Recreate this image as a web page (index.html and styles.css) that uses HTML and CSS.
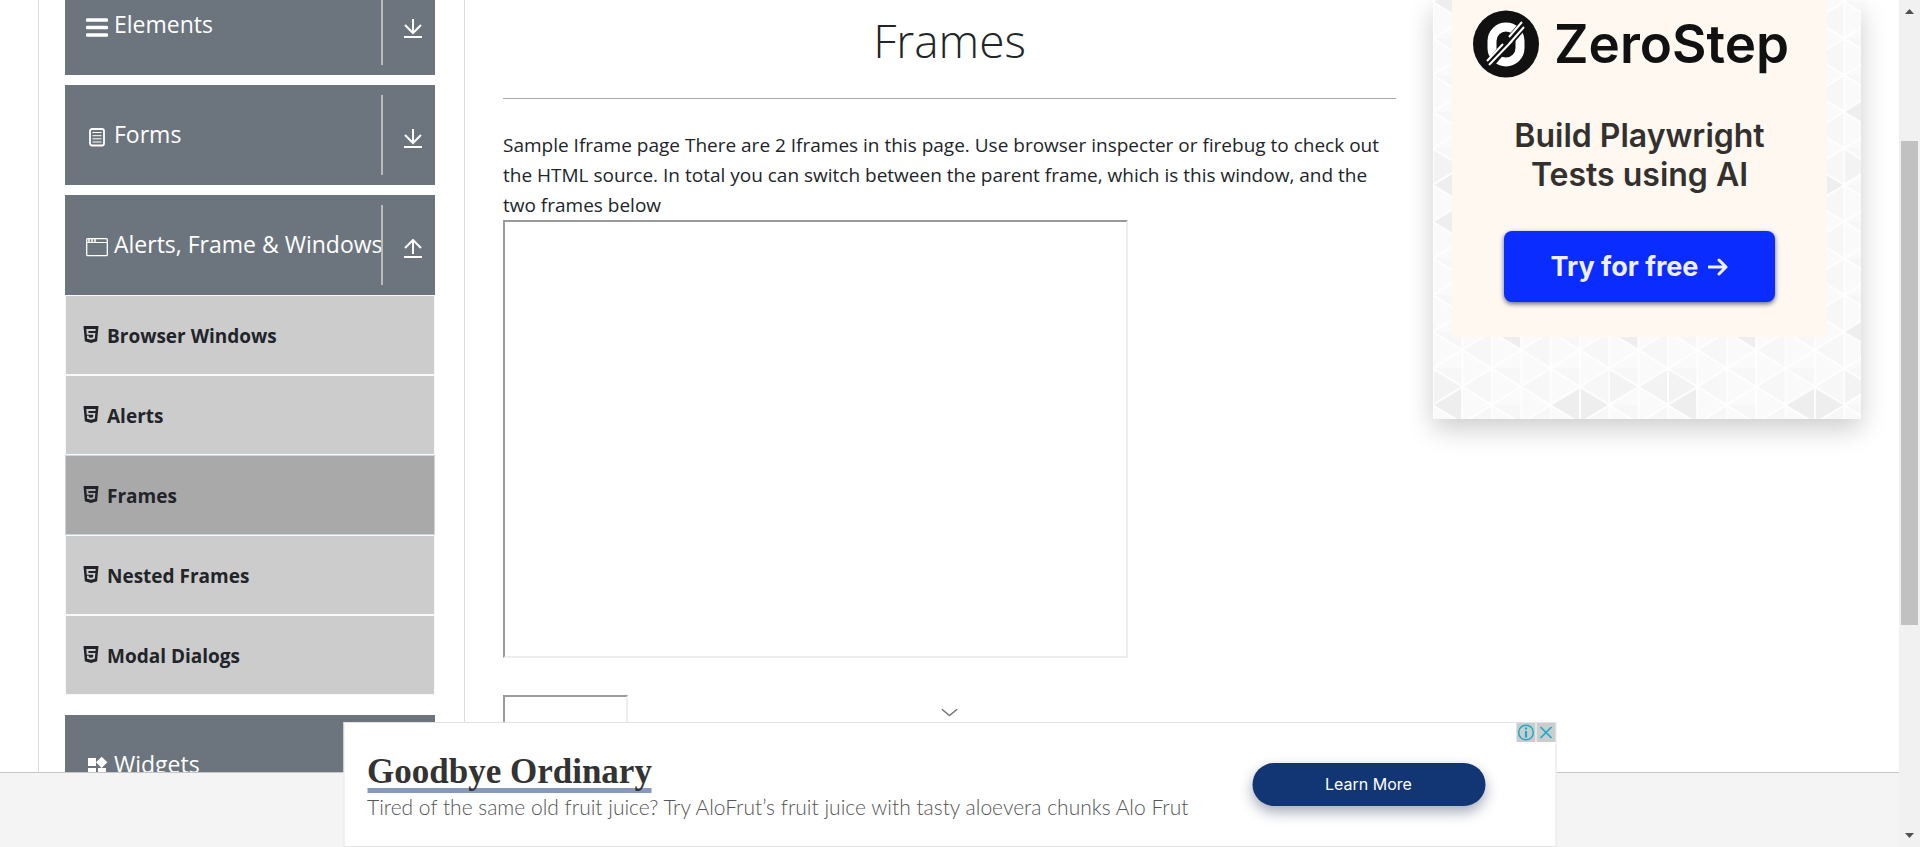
FILE: index.html
```html
<!DOCTYPE html>
<html lang="en">
<head>
<meta charset="utf-8">
<title>Frames</title>
<link rel="stylesheet" href="styles.css">
</head>
<body>
<svg class="defs" aria-hidden="true">
  <symbol id="html5" viewBox="140 96 744 832"><path fill="currentColor" d="M145.2 96l66 746.6L512 928l299.6-85.4L878.9 96H145.2zm595 177.1l-4.8 47.2-1.7 19.5H382.3l8.2 94.2h335.1l-3.3 24.3-21.2 242.2-1.7 16.2-187 51.6v.3h-1.2l-.3.1v-.1h-.1l-188.6-52L310.8 572h91.1l6.5 73.2 102.4 27.7h.4l102-27.6 11.4-118.6H510.9v-.1H306.2l-22.8-253.5-1.7-24.3h460.3l-1.8 24.3z"/></symbol>
  <symbol id="down" viewBox="0 0 18 20"><path d="M9 0v14M1 6l8 8 8-8M0 18h18" fill="none" stroke="currentColor" stroke-width="2"/></symbol>
  <symbol id="up" viewBox="0 0 18 20"><path d="M9 15V1M1 9l8-8 8 8M0 18h18" fill="none" stroke="currentColor" stroke-width="2"/></symbol>
</svg>
<div class="window">
  <div class="page">
    <main class="main">
      <nav class="sidebar" aria-label="Sections">
        <section class="group">
          <button class="head" type="button">
            <svg class="icon" viewBox="0 0 22 22"><path d="M1.500 4h19M1.500 11.500h19M1.500 19h19" stroke="currentColor" stroke-width="3.600" stroke-linecap="round"/></svg>
            <span class="label">Elements</span>
            <span class="toggle"><svg><use href="#down"/></svg></span>
          </button>
        </section>
        <section class="group">
          <button class="head" type="button">
            <svg class="icon" viewBox="0 0 22 22"><rect x="4" y="3" width="14" height="16.500" rx="2" fill="none" stroke="currentColor" stroke-width="1.800"/><path d="M6.500 6.500h9M6.500 9.700h9M6.500 12.800h9M6.500 16h9" stroke="currentColor" stroke-width="1"/></svg>
            <span class="label">Forms</span>
            <span class="toggle"><svg><use href="#down"/></svg></span>
          </button>
        </section>
        <section class="group">
          <button class="head" type="button">
            <svg class="icon" viewBox="0 0 22 22"><rect x=".7" y="2.700" width="20.600" height="17" rx="1" fill="none" stroke="currentColor" stroke-width="1.300"/><path d="M1 6.500h20" stroke="currentColor" stroke-width="1"/><path d="M3 3v3M6 3v3M9 3v3" stroke="currentColor" stroke-width="1.500"/></svg>
            <span class="label">Alerts, Frame &amp; Windows</span>
            <span class="toggle"><svg><use href="#up"/></svg></span>
          </button>
          <ul class="list">
            <li><a href="#"><svg><use href="#html5"/></svg>Browser Windows</a></li>
            <li><a href="#"><svg><use href="#html5"/></svg>Alerts</a></li>
            <li class="active"><a href="#"><svg><use href="#html5"/></svg>Frames</a></li>
            <li><a href="#"><svg><use href="#html5"/></svg>Nested Frames</a></li>
            <li><a href="#"><svg><use href="#html5"/></svg>Modal Dialogs</a></li>
          </ul>
        </section>
        <section class="group">
          <button class="head" type="button">
            <svg class="icon" viewBox="1 1 22 22"><path fill="currentColor" d="M13 13v8h8v-8h-8zM3 21h8v-8H3v8zM3 3v8h8V3H3zm13.660-1.310L11 7.340 16.660 13l5.660-5.660-5.660-5.650z"/></svg>
            <span class="label">Widgets</span>
            <span class="toggle"><svg><use href="#down"/></svg></span>
          </button>
        </section>
      </nav>
      <article class="content">
        <h1>Frames</h1>
        <hr>
        <p>Sample Iframe page There are 2 Iframes in this page. Use browser inspecter or firebug to check out the HTML source. In total you can switch between the parent frame, which is this window, and the two frames below</p>
        <iframe class="frame-large" title="First frame"></iframe>
        <iframe class="frame-small" title="Second frame"></iframe>
      </article>
      <aside class="promo">
        <svg class="texture" aria-hidden="true">
          <defs>
            <pattern id="grid" width="58.750" height="36.667" patternUnits="userSpaceOnUse" patternTransform="translate(0 1.700)">
              <path d="M0 0L29.375 18.333V-18.333zM29.375 18.333L58.750 0V36.667z" fill="#f7f7f7"/>
              <path d="M0 0V36.667M58.750 0V36.667M29.375 0V36.667M0 0L58.750 36.667M0 36.667L58.750 0" stroke="#fff" stroke-width="1.500"/>
            </pattern>
            <pattern id="shade" width="235" height="220" patternUnits="userSpaceOnUse" patternTransform="translate(0 1.700)">
              <g fill="#eeeeee">
                <path d="M1 183.300l27-16v32zM119 183.300l27-16v32zM175 183.300l-27-16v32zM60 110l27-16v32zM177 110l27-16v32z"/>
                <path d="M1 220l27-16v16zM1 0h27v16z"/>
              </g>
              <g fill="#f3f3f3">
                <path d="M28 165l-27-16v32zM204 165l-27-16v32zM207 165l27-16v32z"/>
              </g>
            </pattern>
          </defs>
          <rect width="100%" height="100%" fill="#fafafa"/>
          <rect width="100%" height="100%" fill="url(#grid)"/>
          <rect width="100%" height="100%" fill="url(#shade)"/>
        </svg>
        <div class="promo-card">
          <div class="brand">
            <svg viewBox="0 0 66 68"><ellipse cx="33" cy="34" rx="33" ry="33.500" fill="#111"/><rect x="19" y="17" width="28" height="35" rx="14" fill="none" stroke="#fff" stroke-width="9"/><path d="M15 56L52 13" stroke="#111" stroke-width="9"/><path d="M14 51L30 34M36 27L49 12M16 55L39 31M36 34L51 17" stroke="#fff" stroke-width="2"/></svg>
            <span>ZeroStep</span>
          </div>
          <div class="pitch">Build Playwright<br>Tests using AI</div>
          <a class="try" href="#">Try for free <svg viewBox="0 0 20 18"><path d="M1 9h17M11 2l7 7-7 7" fill="none" stroke="currentColor" stroke-width="3" stroke-linecap="round" stroke-linejoin="round"/></svg></a>
        </div>
      </aside>
    </main>
    <footer class="footer"></footer>
    <div class="banner-dock">
      <button class="collapse" type="button" aria-label="Collapse"><svg viewBox="0 0 16 8"><path d="M0 0l8 6.500L16 0" fill="none" stroke="#777" stroke-width="1.500"/></svg></button>
      <div class="banner">
        <div class="copy">
          <a class="title" href="#">Goodbye Ordinary</a>
          <div class="sub">Tired of the same old fruit juice? Try AloFrut’s fruit juice with tasty aloevera chunks Alo Frut</div>
        </div>
        <a class="learn" href="#">Learn More</a>
        <div class="choices">
          <button type="button" aria-label="Ad information"><svg viewBox="0 0 19 19"><circle cx="9.500" cy="9.500" r="7.300" fill="none" stroke="currentColor" stroke-width="1.500"/><path d="M9.500 4.500v2M9.500 8v6.500" stroke="currentColor" stroke-width="2.200"/></svg></button>
          <button type="button" aria-label="Close"><svg viewBox="0 0 19 19"><path d="M4 4l11 11M15 4L4 15" stroke="currentColor" stroke-width="1.700"/></svg></button>
        </div>
      </div>
    </div>
  </div>
  <div class="scrollbar" aria-hidden="true">
    <svg viewBox="0 0 9 5"><path d="M0 5h9L4.500 0z" fill="#505050"/></svg>
    <div class="track"><div class="thumb"></div></div>
    <svg viewBox="0 0 9 5"><path d="M0 0h9L4.500 5z" fill="#505050"/></svg>
  </div>
</div>
</body>
</html>
```
FILE: styles.css
```css
* { box-sizing: border-box; }
body { margin: 0; font-family: "Open Sans", "Noto Sans", sans-serif; font-size: 19px; line-height: 30px; color: #212529; background: #fff; }
button { font: inherit; border: 0; padding: 0; cursor: pointer; }
a { color: inherit; text-decoration: none; }
svg { display: block; flex: none; }
.defs { position: absolute; width: 0; height: 0; }
.window { display: flex; height: 100vh; overflow: hidden; }
.page { position: relative; flex: 1; min-width: 0; display: flex; flex-direction: column; }
.main { flex: 1; min-height: 0; overflow: hidden; display: flex; align-items: flex-start; padding: 0 38px; }
.footer { height: 75px; background: #f4f4f4; border-top: 1px solid #c6c6c6; }

.sidebar { flex: 0 0 427px; min-width: 0; margin-top: -25px; padding: 0 29px 0 26px; border: solid #dcdcdc; border-width: 0 1px; }
.group { margin-bottom: 10px; }
.head { display: flex; align-items: center; width: 100%; height: 100px; padding: 10px 0 10px 21px; background: #6c757d; color: #fff; text-align: left; }
.icon { width: 22px; height: 22px; margin-top: 4px; }
.label { flex: 1; min-width: 0; padding: 0 0 2px 6px; font-size: 23px; white-space: nowrap; }
.toggle { flex: 0 0 54px; display: flex; align-items: center; align-self: stretch; padding: 8px 0 0 23px; position: relative; }
.toggle::before { content: ""; position: absolute; left: 0; top: 0; width: 2px; height: 80px; background: #bbb; }
.toggle svg { width: 18px; height: 20px; }
.list { list-style: none; margin: 0 0 20px; padding: 0; font-weight: 700; }
.list li { height: 80px; background: #ccc; border: 1px solid #f8f9fa; }
.list .active { background: #a9a9a9; border-color: #ced4da; }
.list a { display: flex; align-items: center; gap: 8px; height: 100%; padding: 2px 17px 0; }
.list svg { width: 16px; height: 17px; margin-bottom: 3px; }

.content { flex: 1; min-width: 0; padding: 10px 37px 0 38px; }
h1 { margin: 0; font-size: 46px; font-weight: 300; line-height: 60px; text-align: center; }
hr { margin: 28px 0 31px; border: 0; border-top: 1px solid #a8a9ab; }
p { margin: 0; }
iframe { display: block; border: 2px inset #eee; }
.frame-large { width: 70%; height: 438px; margin-bottom: 37px; }
.frame-small { width: 14%; height: 125px; }

.promo { position: relative; flex: 0 0 428px; padding: 0 34px 82px 19px; box-shadow: 0 10px 25px rgba(0,0,0,.2); }
.texture { position: absolute; inset: 0; width: 100%; height: 100%; }
.promo-card { position: relative; display: flex; flex-direction: column; align-items: center; padding: 10px 0 35px; background: #fef8f1; font-family: Inter, sans-serif; }
.brand { display: flex; align-items: center; align-self: flex-start; gap: 15px; padding-left: 21px; font-size: 53px; font-weight: 600; line-height: 68px; color: #111; }
.brand svg { width: 66px; height: 68px; }
.pitch { margin: 38px 0 37px; font-size: 32px; font-weight: 600; line-height: 39px; text-align: center; color: #33302e; }
.try { display: flex; align-items: center; justify-content: center; gap: 10px; width: 271px; height: 71px; border-radius: 8px; background: #0a2cff; color: #eef0ff; font-size: 27px; font-weight: 700; box-shadow: 0 2px 5px rgba(0,0,60,.6); }
.try svg { width: 20px; height: 18px; }

.banner-dock { position: absolute; bottom: 0; left: 50%; transform: translateX(-50%); width: 1213px; }
.collapse { display: block; margin: 0 auto; padding: 0 0 5px; background: none; }
.collapse svg { width: 16px; height: 8px; }
.banner { position: relative; display: flex; align-items: center; justify-content: space-between; height: 125px; padding: 0 70px 0 23px; background: #fff; border: 1px solid #e3e3e3; }
.title { display: inline-block; font-family: "Liberation Serif", serif; font-size: 35px; font-weight: 700; line-height: 33px; color: #333; border-bottom: 5px solid #8799bd; }
.copy { padding-top: 6px; }
.sub { font-family: Lato, sans-serif; font-size: 21px; font-weight: 300; line-height: 28px; color: #555; }
.learn { width: 233px; height: 43px; border-radius: 22px; background: #123574; color: #fff; font-family: Inter, sans-serif; font-size: 16px; line-height: 43px; text-align: center; box-shadow: 0 6px 14px rgba(30,40,80,.4); }
.choices { position: absolute; top: 0; right: 0; display: flex; gap: 1px; }
.choices button { width: 19px; height: 19px; background: #ccc; color: #13aecb; }
.choices svg { width: 19px; height: 19px; }

.scrollbar { flex: 0 0 21px; display: flex; flex-direction: column; align-items: center; padding: 9px 0; background: #f1f1f1; }
.scrollbar svg { width: 9px; height: 5px; }
.track { flex: 1; width: 17px; padding-top: 127px; }
.thumb { height: 70%; background: #c1c1c1; }
```
